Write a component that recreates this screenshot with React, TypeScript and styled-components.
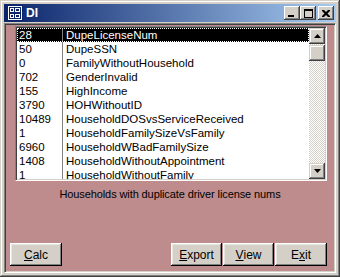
import React from 'react'
import styled, { createGlobalStyle } from 'styled-components';

const rows: [string, string][] = [
    ['28', 'DupeLicenseNum'],
    ['50', 'DupeSSN'],
    ['0', 'FamilyWithoutHousehold'],
    ['702', 'GenderInvalid'],
    ['155', 'HighIncome'],
    ['3790', 'HOHWithoutID'],
    ['10489', 'HouseholdDOSvsServiceReceived'],
    ['1', 'HouseholdFamilySizeVsFamily'],
    ['6960', 'HouseholdWBadFamilySize'],
    ['1408', 'HouseholdWithoutAppointment'],
    ['1', 'HouseholdWithoutFamily'],
];

const App: React.FC = () => {
    return (
        <>
            <Global />
            <Window>
                <TitleBar>
                    <FormIcon width="16" height="16" viewBox="0 0 16 16">
                        <rect x="0" y="0" width="16" height="16" fill="#0a246a" />
                        <rect x="1.5" y="1.5" width="13" height="13" fill="none" stroke="#fff" />
                        <rect x="3.5" y="3.5" width="3" height="3" fill="none" stroke="#fff" />
                        <rect x="8.5" y="3.5" width="4" height="3" fill="none" stroke="#fff" />
                        <rect x="3.5" y="9.5" width="3" height="3" fill="none" stroke="#fff" />
                        <rect x="8.5" y="9.5" width="4" height="3" fill="none" stroke="#fff" />
                    </FormIcon>
                    <Title>DI</Title>
                    <CaptionButtons>
                        <CaptionButton>
                            <svg width="8" height="7" viewBox="0 0 8 7"><rect x="0" y="5" width="6" height="2" fill="#000" /></svg>
                        </CaptionButton>
                        <CaptionButton>
                            <svg width="9" height="9" viewBox="0 0 9 9"><rect x="0.5" y="0.5" width="8" height="8" fill="none" stroke="#000" /><rect x="0" y="0" width="9" height="2" fill="#000" /></svg>
                        </CaptionButton>
                        <CaptionButton $gap>
                            <svg width="8" height="7" viewBox="0 0 8 7">
                                <path d="M0 0h2l2 2 2-2h2v1l-2.5 2.5 2.5 2.5v1h-2l-2-2-2 2h-2v-1l2.5-2.5-2.5-2.5z" fill="#000" />
                            </svg>
                        </CaptionButton>
                    </CaptionButtons>
                </TitleBar>
                <Client>
                    <ListBox>
                        <Rows>
                            {rows.map(([count, name], i) => (
                                <Row key={name} $selected={i === 0}>
                                    <CountCell>{count}</CountCell>
                                    <NameCell>{name}</NameCell>
                                </Row>
                            ))}
                        </Rows>
                        <ScrollBar>
                            <ArrowButton>
                                <svg width="7" height="4" viewBox="0 0 7 4"><path d="M3.5 0L7 4H0z" fill="#000" /></svg>
                            </ArrowButton>
                            <Thumb />
                            <Track />
                            <ArrowButton>
                                <svg width="7" height="4" viewBox="0 0 7 4"><path d="M0 0h7L3.5 4z" fill="#000" /></svg>
                            </ArrowButton>
                        </ScrollBar>
                    </ListBox>
                    <Caption>Households with duplicate driver license nums</Caption>
                    <ButtonRow>
                        <Button $w={52}><u>C</u>alc</Button>
                        <ButtonGroup>
                            <Button $w={51}><u>E</u>xport</Button>
                            <Button $w={51}><u>V</u>iew</Button>
                            <Button $w={52}>E<u>x</u>it</Button>
                        </ButtonGroup>
                    </ButtonRow>
                </Client>
            </Window>
        </>
    )
}

const Global = createGlobalStyle`
    html, body {
        margin: 0;
        padding: 0;
        width: 340px;
        height: 277px;
        overflow: hidden;
        background: #d4d0c8;
    }
`;

const Window = styled.div`
    box-sizing: border-box;
    width: 340px;
    height: 277px;
    padding: 4px;
    display: flex;
    flex-direction: column;
    background: #d4d0c8;
    box-shadow: inset -1px -1px #404040, inset 1px 1px #d4d0c8,
        inset -2px -2px #808080, inset 2px 2px #ffffff;
    font-family: Tahoma, "Liberation Sans", sans-serif;
`;

const TitleBar = styled.div`
    height: 18px;
    display: flex;
    align-items: center;
    padding: 0 2px 0 3px;
    background: linear-gradient(to right, #0a246a, #a6caf0);
`;

const FormIcon = styled.svg`
    flex: none;
`;

const Title = styled.span`
    margin-left: 3px;
    color: #ffffff;
    font-weight: bold;
    font-size: 12px;
`;

const CaptionButtons = styled.div`
    margin-left: auto;
    display: flex;
`;

const CaptionButton = styled.div<{ $gap?: boolean }>`
    width: 16px;
    height: 14px;
    margin-left: ${p => (p.$gap ? '2px' : '0')};
    box-sizing: border-box;
    display: flex;
    align-items: center;
    justify-content: center;
    background: #d4d0c8;
    box-shadow: inset -1px -1px #404040, inset 1px 1px #ffffff, inset -2px -2px #808080;
`;

const Client = styled.div`
    flex: 1;
    margin-top: 1px;
    display: flex;
    flex-direction: column;
    background: #be8c8c;
    border-top: 1px solid #808080;
    border-left: 1px solid #808080;
    border-right: 1px solid #ffffff;
    border-bottom: 1px solid #ffffff;
    box-shadow: inset 1px 1px #404040, inset -1px -1px #d4d0c8;
    padding: 2px;
`;

const ListBox = styled.div`
    box-sizing: border-box;
    height: 155px;
    margin: 0 6px 0 8px;
    display: flex;
    background: #ffffff;
    border-top: 1px solid #808080;
    border-left: 1px solid #808080;
    border-right: 1px solid #ffffff;
    border-bottom: 1px solid #ffffff;
    box-shadow: inset 1px 1px #404040, inset -1px -1px #d4d0c8;
    padding: 1px;
`;

const Rows = styled.div`
    flex: 1;
    overflow: hidden;
    font-family: "Liberation Sans", Arial, sans-serif;
    font-size: 11.5px;
`;

const Row = styled.div<{ $selected?: boolean }>`
    height: 14px;
    line-height: 14px;
    display: flex;
    box-sizing: border-box;
    background: ${p => (p.$selected ? '#000000' : 'transparent')};
    color: ${p => (p.$selected ? '#ffffff' : '#000000')};
    outline: ${p => (p.$selected ? '1px dotted #ffffff' : 'none')};
    outline-offset: -1px;
`;

const CountCell = styled.div`
    width: 46px;
    padding-left: 2px;
    box-sizing: border-box;
    border-right: 1px solid #808080;
`;

const NameCell = styled.div`
    padding-left: 3px;
    white-space: nowrap;
`;

const ScrollBar = styled.div`
    width: 16px;
    display: flex;
    flex-direction: column;
    background: repeating-conic-gradient(#d4d0c8 0 25%, #ffffff 0 50%) 0 0 / 2px 2px;
`;

const ArrowButton = styled.div`
    height: 16px;
    display: flex;
    align-items: center;
    justify-content: center;
    background: #d4d0c8;
    box-shadow: inset -1px -1px #404040, inset 1px 1px #d4d0c8,
        inset -2px -2px #808080, inset 2px 2px #ffffff;
`;

const Thumb = styled(ArrowButton)`
    height: 16px;
    margin-top: 1px;
`;

const Track = styled.div`
    flex: 1;
`;

const Caption = styled.div`
    margin-top: 6px;
    text-align: center;
    font-family: "Liberation Sans", Arial, sans-serif;
    font-size: 11px;
    letter-spacing: -0.1px;
    line-height: 14px;
    color: #000000;
`;

const ButtonRow = styled.div`
    margin-top: auto;
    margin-bottom: 4px;
    display: flex;
    justify-content: space-between;
    padding: 0 6px 0 3px;
`;

const ButtonGroup = styled.div`
    display: flex;
    gap: 1px;
`;

const Button = styled.div<{ $w: number }>`
    width: ${p => p.$w}px;
    height: 23px;
    box-sizing: border-box;
    display: flex;
    align-items: center;
    justify-content: center;
    background: #d4d0c8;
    font-family: "Liberation Sans", Arial, sans-serif;
    font-size: 12px;
    color: #000000;
    box-shadow: inset -1px -1px #000000, inset 1px 1px #ffffff,
        inset -2px -2px #808080, inset 2px 2px #e8e6e0;
`;

export default App
